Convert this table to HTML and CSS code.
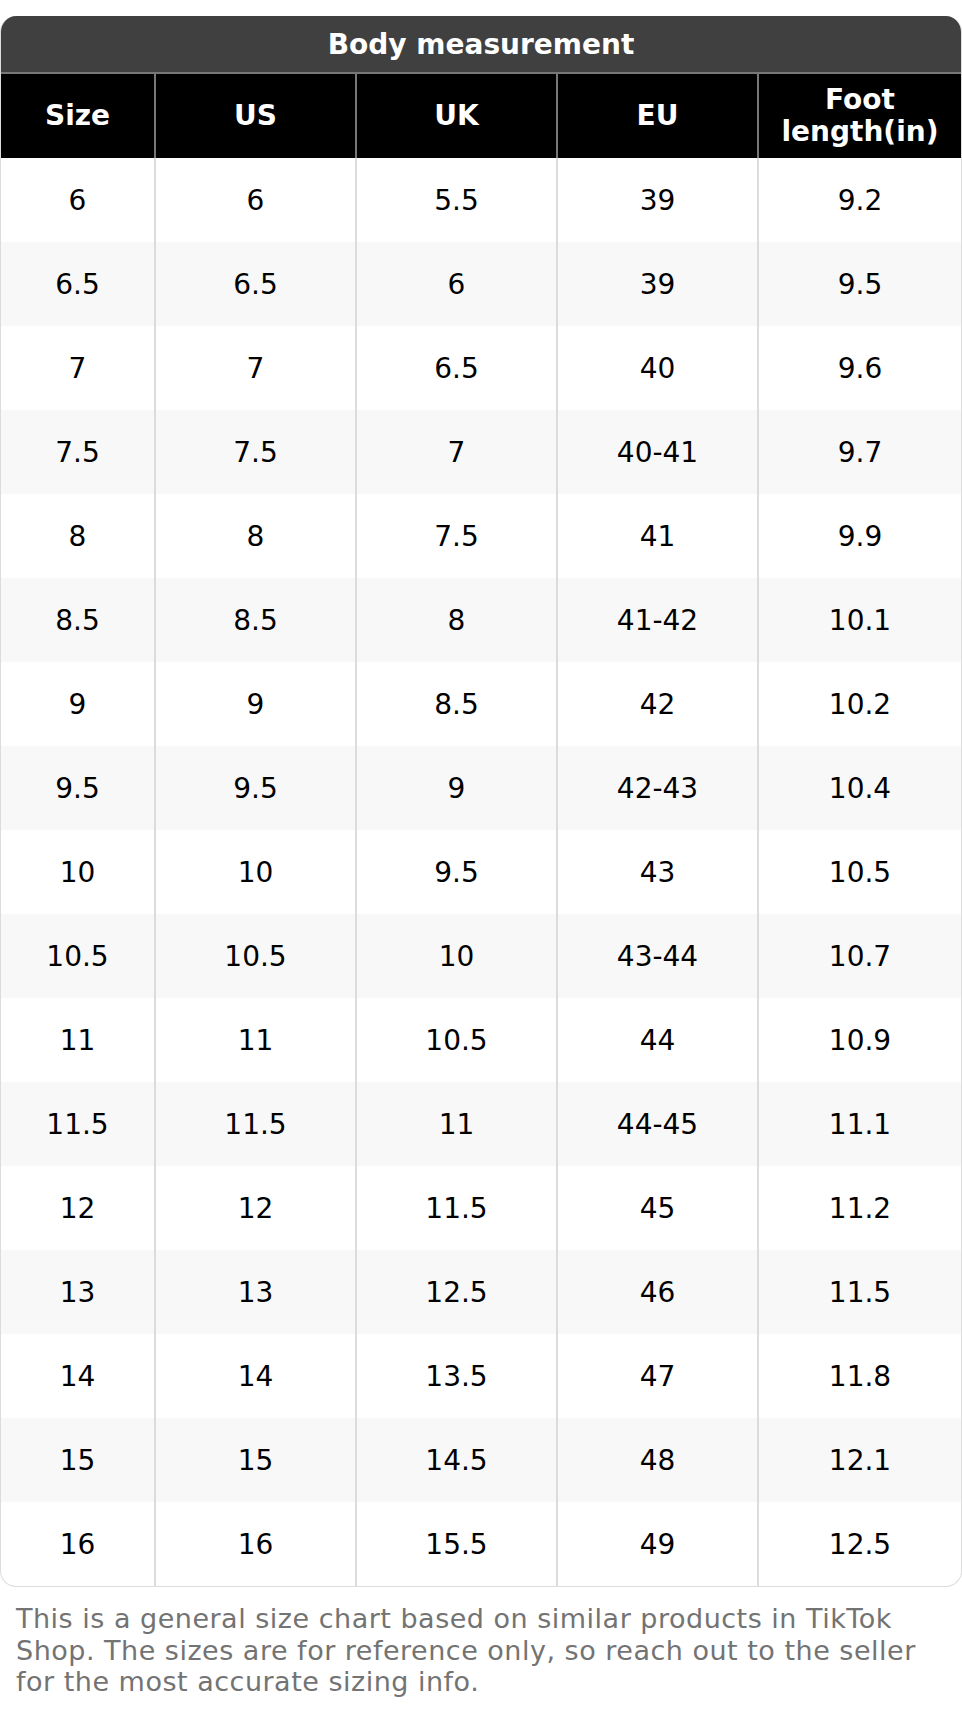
FILE: index.html
```html
<!DOCTYPE html>
<html>
<head>
<meta charset="utf-8">
<link rel="stylesheet" href="styles.css">
</head>
<body>
<div class="chart">
  <div class="title">Body measurement</div>
  <table class="grid">
    <colgroup>
      <col class="c1"><col class="c2"><col class="c2"><col class="c2"><col>
    </colgroup>
    <thead>
      <tr><th>Size</th><th>US</th><th>UK</th><th>EU</th><th>Foot<br>length(in)</th></tr>
    </thead>
    <tbody>
      <tr><td>6</td><td>6</td><td>5.5</td><td>39</td><td>9.2</td></tr>
      <tr><td>6.5</td><td>6.5</td><td>6</td><td>39</td><td>9.5</td></tr>
      <tr><td>7</td><td>7</td><td>6.5</td><td>40</td><td>9.6</td></tr>
      <tr><td>7.5</td><td>7.5</td><td>7</td><td>40-41</td><td>9.7</td></tr>
      <tr><td>8</td><td>8</td><td>7.5</td><td>41</td><td>9.9</td></tr>
      <tr><td>8.5</td><td>8.5</td><td>8</td><td>41-42</td><td>10.1</td></tr>
      <tr><td>9</td><td>9</td><td>8.5</td><td>42</td><td>10.2</td></tr>
      <tr><td>9.5</td><td>9.5</td><td>9</td><td>42-43</td><td>10.4</td></tr>
      <tr><td>10</td><td>10</td><td>9.5</td><td>43</td><td>10.5</td></tr>
      <tr><td>10.5</td><td>10.5</td><td>10</td><td>43-44</td><td>10.7</td></tr>
      <tr><td>11</td><td>11</td><td>10.5</td><td>44</td><td>10.9</td></tr>
      <tr><td>11.5</td><td>11.5</td><td>11</td><td>44-45</td><td>11.1</td></tr>
      <tr><td>12</td><td>12</td><td>11.5</td><td>45</td><td>11.2</td></tr>
      <tr><td>13</td><td>13</td><td>12.5</td><td>46</td><td>11.5</td></tr>
      <tr><td>14</td><td>14</td><td>13.5</td><td>47</td><td>11.8</td></tr>
      <tr><td>15</td><td>15</td><td>14.5</td><td>48</td><td>12.1</td></tr>
      <tr><td>16</td><td>16</td><td>15.5</td><td>49</td><td>12.5</td></tr>
    </tbody>
  </table>
</div>
<p class="note">This is a general size chart based on similar products in TikTok Shop. The sizes are for reference only, so reach out to the seller for the most accurate sizing info.</p>
</body>
</html>
```
FILE: styles.css
```css
html, body {
  margin: 0;
  padding: 0;
  background: #fff;
}
body {
  font-family: "DejaVu Sans", sans-serif;
  width: 962px;
}
.chart {
  margin-top: 16px;
  border: 1px solid #dcdcdc;
  border-top: none;
  border-radius: 16px;
  overflow: hidden;
  box-sizing: border-box;
  width: 962px;
}
.title {
  height: 56px;
  background: #404040;
  color: #fff;
  font-weight: bold;
  font-size: 28px;
  display: flex;
  align-items: center;
  justify-content: center;
}
.grid {
  width: 100%;
  border-collapse: collapse;
  table-layout: fixed;
}
.c1 { width: 154px; }
.c2 { width: 201px; }
.grid th {
  background: #000;
  color: #fff;
  font-weight: bold;
  font-size: 28px;
  line-height: 32px;
  height: 84px;
  padding: 0;
  border-top: 2px solid #777;
  border-left: 2px solid #777;
  text-align: center;
  vertical-align: middle;
}
.grid td {
  font-size: 28px;
  height: 84px;
  padding: 0;
  color: #000;
  border-left: 2px solid #dcdcdc;
  text-align: center;
  vertical-align: middle;
}
.grid th:first-child, .grid td:first-child {
  border-left: none;
}
.grid tbody tr:nth-child(even) td {
  background: #f8f8f8;
}
.note {
  margin: 16px 16px 0;
  font-size: 27px;
  letter-spacing: 0.5px;
  line-height: 31.5px;
  color: #737373;
}
```
